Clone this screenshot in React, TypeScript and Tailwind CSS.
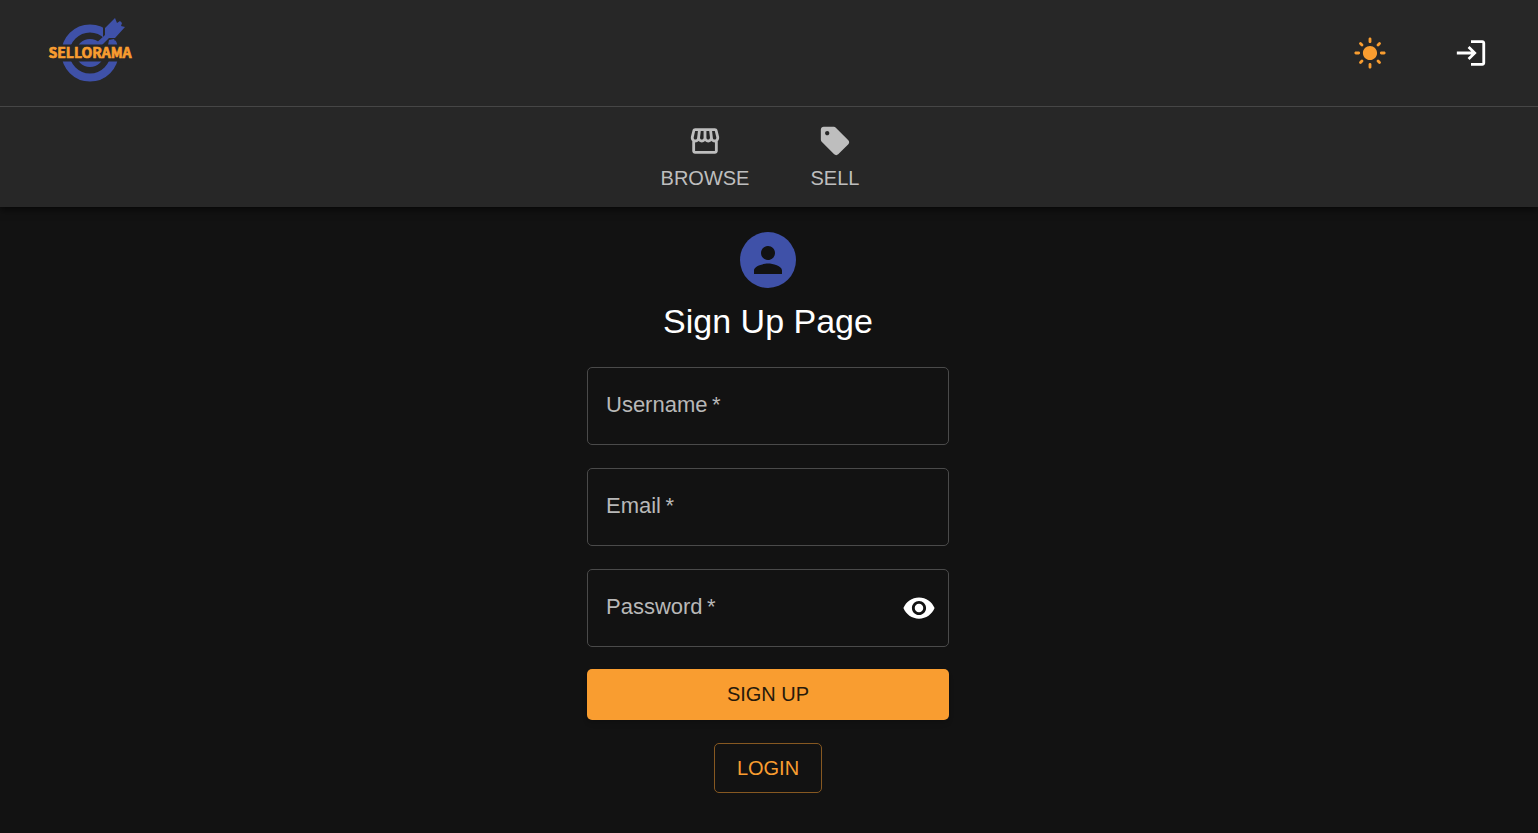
import { useState } from "react";
import { MdLightMode, MdLogin, MdOutlineStorefront, MdPerson, MdSell, MdVisibility } from "react-icons/md";

function Logo() {
  return (
    <svg viewBox="0 0 100 80" className="h-20 w-25" role="img" aria-label="Sellorama">
      <g fill="none" stroke="#3f51a8">
        <circle cx="50" cy="43" r="24.500" strokeWidth="8" />
        <circle cx="50" cy="43" r="11" strokeWidth="6" />
      </g>
      <circle cx="50" cy="43" r="4" fill="#3f51a8" />
      <path d="M50 40 L63 27 L63 13 L78 28 L62 44 Z" fill="#272727" />
      <path d="M69 30 L74 29 L77 35 L68 35 Z" fill="#3f51a8" />
      <path d="M53 36 L65 25 L65 18 L75 8 L77 13 L80 11 L82 13 L81 16 L85 17 L75 28 L69 28 L58 39 Z" fill="#3f51a8" />
      <rect x="18" y="34.500" width="64" height="17" fill="#272727" />
      <text
        x="50"
        y="48"
        textAnchor="middle"
        fill="#f99d30"
        stroke="#f99d30"
        strokeWidth="0.700"
        className="font-['Noto_Sans_CJK_JP',sans-serif] text-[14px] font-bold"
      >
        SELLORAMA
      </text>
    </svg>
  );
}

function Field({ id, label, type, autoComplete, toggle }: {
  id: string;
  label: string;
  type: string;
  autoComplete: string;
  toggle?: () => void;
}) {
  const [value, setValue] = useState("");
  return (
    <div className="relative flex h-[78px] w-full items-center rounded-[5px] border border-[#4a4a4a] pr-3 focus-within:border-[#f99d30]">
      {value === "" && (
        <label htmlFor={id} className="pointer-events-none absolute top-6 left-[18px] text-[22px] leading-[26px] text-[#b8b8b8]">
          {label}{"\u2009*"}
        </label>
      )}
      <input
        id={id}
        aria-label={label}
        type={type}
        required
        autoComplete={autoComplete}
        value={value}
        onChange={(e) => setValue(e.target.value)}
        className="h-full min-w-0 flex-1 bg-transparent px-[18px] text-[22px] text-white outline-none"
      />
      {toggle && (
        <button type="button" aria-label="Toggle password visibility" onClick={toggle} className="cursor-pointer">
          <MdVisibility className="size-[34px] text-white" />
        </button>
      )}
    </div>
  );
}

export default function App() {
  const [shown, setShown] = useState(false);
  return (
    <div className="min-h-screen bg-[#121212] font-['Liberation_Sans',Arial,sans-serif] text-white">
      <header className="bg-[#272727] shadow-[0_2px_8px_rgba(0,0,0,0.7)]">
        <div className="flex h-[107px] items-center justify-between border-b border-[#464646] pr-[50px] pl-10">
          <a href="#home" className="-mt-1.5">
            <Logo />
          </a>
          <div className="flex items-center gap-[67px]">
            <button type="button" aria-label="Switch theme" className="cursor-pointer">
              <MdLightMode className="size-[34px] text-[#f99d30]" />
            </button>
            <button type="button" aria-label="Log in" className="cursor-pointer">
              <MdLogin className="size-[34px]" />
            </button>
          </div>
        </div>
        <nav className="flex h-[100px] justify-center pl-0.5 text-xl leading-6 text-[#bebebe]">
          <a href="#browse" className="flex w-[130px] flex-col items-center gap-2 pt-[17px]">
            <MdOutlineStorefront className="size-[34px]" />
            BROWSE
          </a>
          <a href="#sell" className="flex w-[130px] flex-col items-center gap-2 pt-[17px]">
            <MdSell className="size-[34px]" />
            SELL
          </a>
        </nav>
      </header>

      <div className="pr-0.5">
        <main className="mx-auto flex max-w-[362px] flex-col items-center pt-[25px] pb-10">
          <div className="flex size-14 items-center justify-center rounded-full bg-[#3f51a8]">
            <MdPerson className="size-[42px] text-[#121212]" />
          </div>
          <h1 className="mt-3 text-[34px] leading-[42px]">Sign Up Page</h1>
          <form className="mt-[25px] w-full" onSubmit={(e) => e.preventDefault()}>
            <div className="flex flex-col gap-[23px]">
              <Field id="username" label="Username" type="text" autoComplete="username" />
              <Field id="email" label="Email" type="email" autoComplete="email" />
              <Field
                id="password"
                label="Password"
                type={shown ? "text" : "password"}
                autoComplete="new-password"
                toggle={() => setShown(!shown)}
              />
            </div>
            <button
              type="submit"
              className="mt-[22px] h-[51px] w-full cursor-pointer rounded-[5px] bg-[#f99d30] pb-0.5 text-xl text-[#27190a] shadow-md"
            >
              SIGN UP
            </button>
          </form>
          <button
            type="button"
            className="mt-[23px] h-[50px] w-[108px] cursor-pointer rounded-[5px] border border-[#865821] text-xl text-[#f99d30]"
          >
            LOGIN
          </button>
        </main>
      </div>
    </div>
  );
}
